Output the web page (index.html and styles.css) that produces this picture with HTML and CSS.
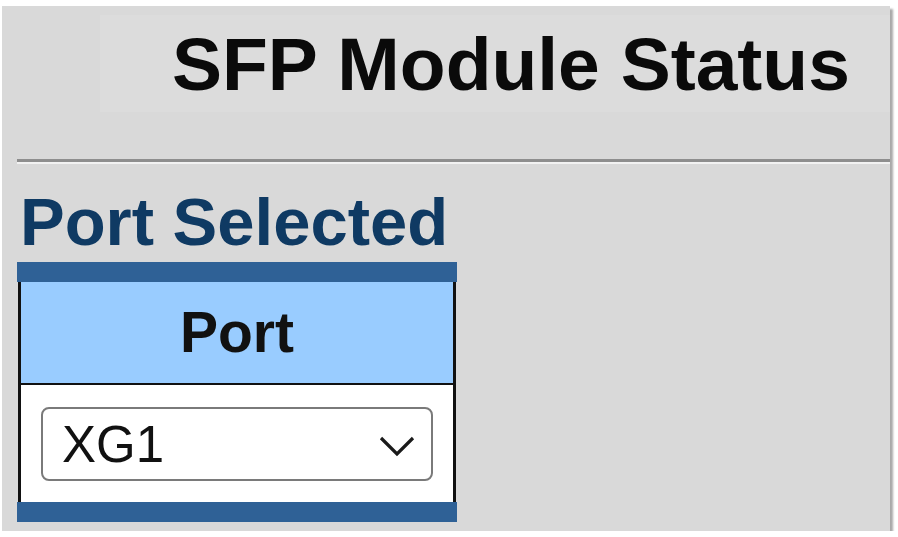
FILE: index.html
```html
<!DOCTYPE html>
<html lang="en">
<head>
  <meta charset="UTF-8" />
  <title>SFP Module Status</title>
  <link rel="stylesheet" href="styles.css">
</head>
<body>
  <div class="panel">
    <div class="title-box">
      <h1>SFP Module Status</h1>
    </div>
    <hr class="divider">

    <h2 class="section-title">Port Selected</h2>

    <div class="port-table">
      <div class="port-head">Port</div>
      <div class="port-cell">
        <div class="select-box">
          <span>XG1</span>
          <svg width="36" height="22" viewBox="0 0 36 22">
            <path d="M2 3 L18 19 L34 3" fill="none" stroke="#1a1a1a" stroke-width="3.2" />
          </svg>
        </div>
      </div>
    </div>
  </div>
</body>
</html>
```

FILE: styles.css
```css
body {
  margin: 0;
  background: #ffffff;
  font-family: 'Liberation Sans', Arial, sans-serif;
}

.panel {
  width: 888px;
  height: 525px;
  margin: 6px 0 0 2px;
  background: #d9d9d9;
  box-shadow: 3px 3px 2px #a9a9a9;
  overflow: hidden;
}

.title-box {
  margin: 9px 0 0 98px;
  height: 97px;
  background: #dcdcdc;
  padding-top: 9px;
  box-sizing: border-box;
}

.title-box h1 {
  margin: 0;
  padding-left: 72px;
  font-size: 75px;
  line-height: 80px;
  font-weight: bold;
  color: #0a0a0a;
}

.divider {
  margin: 47px 0 0 15px;
  height: 0;
  border: none;
  border-top: 3px solid #8e8e8e;
  border-bottom: 2px solid #f2f2f2;
}

.section-title {
  margin: 23px 0 0 18px;
  font-size: 67px;
  line-height: 70px;
  font-weight: bold;
  color: #0f3a63;
}

.port-table {
  width: 440px;
  margin: 5px 0 0 15px;
  border-top: 20px solid #2f6196;
  border-bottom: 20px solid #2f6196;
  box-sizing: border-box;
}

.port-head {
  height: 101px;
  background: #99ccff;
  border-left: 3px solid #111;
  border-right: 3px solid #111;
  border-bottom: 2px solid #111;
  margin: 0 1px;
  text-align: center;
  font-size: 57px;
  font-weight: bold;
  line-height: 100px;
  color: #111;
}

.port-cell {
  background: #ffffff;
  border-left: 3px solid #111;
  border-right: 3px solid #111;
  margin: 0 1px;
  padding: 22px 20px 21px 20px;
}

.select-box {
  height: 74px;
  border: 2px solid #7a7a7a;
  border-radius: 8px;
  box-sizing: border-box;
  display: flex;
  align-items: center;
  justify-content: space-between;
  padding: 0 16px 0 19px;
  font-size: 51px;
  color: #111;
}

.select-box svg {
  margin-top: 4px;
}
```
